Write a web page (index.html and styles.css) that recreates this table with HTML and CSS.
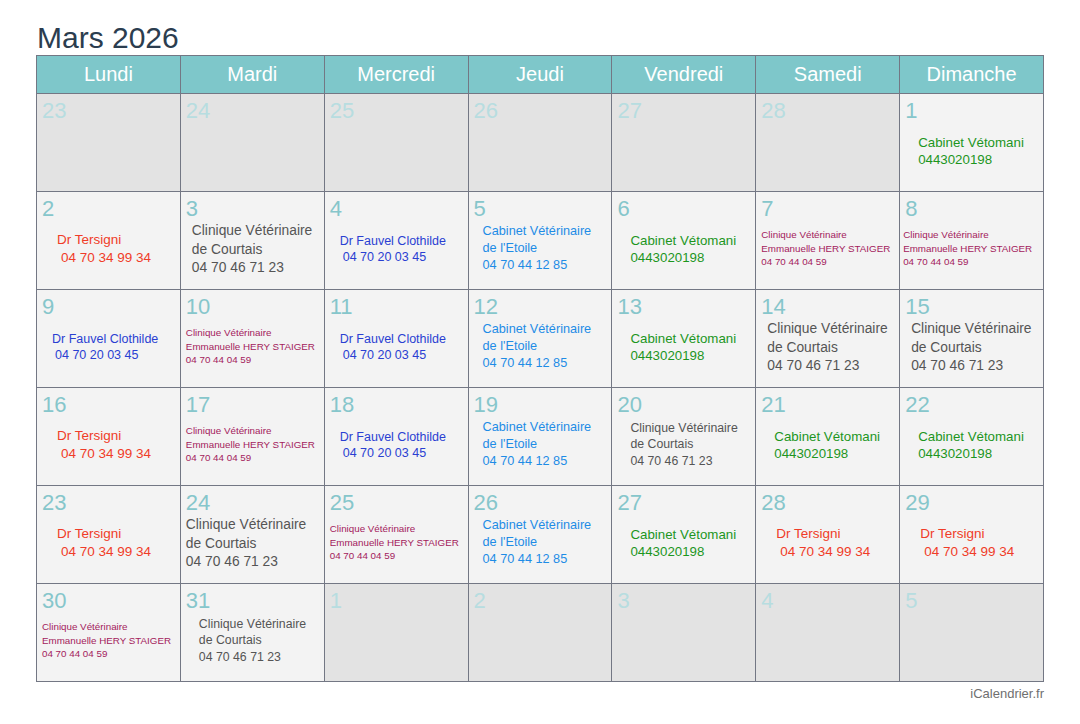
FILE: index.html
```html
<!DOCTYPE html>
<html lang="fr">
<head>
<meta charset="utf-8">
<title>Mars 2026</title>
<link rel="stylesheet" href="styles.css">
</head>
<body>
<div class="page">
  <h1 class="title">Mars 2026</h1>
  <div class="cal">
    <div class="hd">Lundi</div>
    <div class="hd">Mardi</div>
    <div class="hd">Mercredi</div>
    <div class="hd">Jeudi</div>
    <div class="hd">Vendredi</div>
    <div class="hd">Samedi</div>
    <div class="hd">Dimanche</div>

    <div class="cell off"><span class="num">23</span></div>
    <div class="cell off"><span class="num">24</span></div>
    <div class="cell off"><span class="num">25</span></div>
    <div class="cell off"><span class="num">26</span></div>
    <div class="cell off"><span class="num">27</span></div>
    <div class="cell off"><span class="num">28</span></div>
    <div class="cell"><span class="num">1</span>
      <div class="body"><div class="ev green"><div>Cabinet Vétomani</div><div>0443020198</div></div></div></div>

    <div class="cell"><span class="num">2</span>
      <div class="body"><div class="ev red"><div>Dr Tersigni</div><div class="ind">04 70 34 99 34</div></div></div></div>
    <div class="cell"><span class="num">3</span>
      <div class="body"><div class="ev gray"><div>Clinique Vétérinaire</div><div>de Courtais</div><div>04 70 46 71 23</div></div></div></div>
    <div class="cell"><span class="num">4</span>
      <div class="body"><div class="ev blue"><div>Dr Fauvel Clothilde</div><div class="ind">04 70 20 03 45</div></div></div></div>
    <div class="cell"><span class="num">5</span>
      <div class="body"><div class="ev lblue"><div>Cabinet Vétérinaire</div><div>de l'Etoile</div><div>04 70 44 12 85</div></div></div></div>
    <div class="cell"><span class="num">6</span>
      <div class="body"><div class="ev green"><div>Cabinet Vétomani</div><div>0443020198</div></div></div></div>
    <div class="cell"><span class="num">7</span>
      <div class="body"><div class="ev mag"><div>Clinique Vétérinaire</div><div>Emmanuelle HERY STAIGER</div><div>04 70 44 04 59</div></div></div></div>
    <div class="cell"><span class="num">8</span>
      <div class="body"><div class="ev mag edge"><div>Clinique Vétérinaire</div><div>Emmanuelle HERY STAIGER</div><div>04 70 44 04 59</div></div></div></div>

    <div class="cell"><span class="num">9</span>
      <div class="body"><div class="ev blue"><div>Dr Fauvel Clothilde</div><div class="ind">04 70 20 03 45</div></div></div></div>
    <div class="cell"><span class="num">10</span>
      <div class="body"><div class="ev mag"><div>Clinique Vétérinaire</div><div>Emmanuelle HERY STAIGER</div><div>04 70 44 04 59</div></div></div></div>
    <div class="cell"><span class="num">11</span>
      <div class="body"><div class="ev blue"><div>Dr Fauvel Clothilde</div><div class="ind">04 70 20 03 45</div></div></div></div>
    <div class="cell"><span class="num">12</span>
      <div class="body"><div class="ev lblue"><div>Cabinet Vétérinaire</div><div>de l'Etoile</div><div>04 70 44 12 85</div></div></div></div>
    <div class="cell"><span class="num">13</span>
      <div class="body"><div class="ev green"><div>Cabinet Vétomani</div><div>0443020198</div></div></div></div>
    <div class="cell"><span class="num">14</span>
      <div class="body"><div class="ev gray"><div>Clinique Vétérinaire</div><div>de Courtais</div><div>04 70 46 71 23</div></div></div></div>
    <div class="cell"><span class="num">15</span>
      <div class="body"><div class="ev gray"><div>Clinique Vétérinaire</div><div>de Courtais</div><div>04 70 46 71 23</div></div></div></div>

    <div class="cell"><span class="num">16</span>
      <div class="body"><div class="ev red"><div>Dr Tersigni</div><div class="ind">04 70 34 99 34</div></div></div></div>
    <div class="cell"><span class="num">17</span>
      <div class="body"><div class="ev mag"><div>Clinique Vétérinaire</div><div>Emmanuelle HERY STAIGER</div><div>04 70 44 04 59</div></div></div></div>
    <div class="cell"><span class="num">18</span>
      <div class="body"><div class="ev blue"><div>Dr Fauvel Clothilde</div><div class="ind">04 70 20 03 45</div></div></div></div>
    <div class="cell"><span class="num">19</span>
      <div class="body"><div class="ev lblue"><div>Cabinet Vétérinaire</div><div>de l'Etoile</div><div>04 70 44 12 85</div></div></div></div>
    <div class="cell"><span class="num">20</span>
      <div class="body"><div class="ev gray sm"><div>Clinique Vétérinaire</div><div>de Courtais</div><div>04 70 46 71 23</div></div></div></div>
    <div class="cell"><span class="num">21</span>
      <div class="body"><div class="ev green"><div>Cabinet Vétomani</div><div>0443020198</div></div></div></div>
    <div class="cell"><span class="num">22</span>
      <div class="body"><div class="ev green"><div>Cabinet Vétomani</div><div>0443020198</div></div></div></div>

    <div class="cell"><span class="num">23</span>
      <div class="body"><div class="ev red"><div>Dr Tersigni</div><div class="ind">04 70 34 99 34</div></div></div></div>
    <div class="cell"><span class="num">24</span>
      <div class="body"><div class="ev gray tight"><div>Clinique Vétérinaire</div><div>de Courtais</div><div>04 70 46 71 23</div></div></div></div>
    <div class="cell"><span class="num">25</span>
      <div class="body"><div class="ev mag"><div>Clinique Vétérinaire</div><div>Emmanuelle HERY STAIGER</div><div>04 70 44 04 59</div></div></div></div>
    <div class="cell"><span class="num">26</span>
      <div class="body"><div class="ev lblue"><div>Cabinet Vétérinaire</div><div>de l'Etoile</div><div>04 70 44 12 85</div></div></div></div>
    <div class="cell"><span class="num">27</span>
      <div class="body"><div class="ev green"><div>Cabinet Vétomani</div><div>0443020198</div></div></div></div>
    <div class="cell"><span class="num">28</span>
      <div class="body"><div class="ev red"><div>Dr Tersigni</div><div class="ind">04 70 34 99 34</div></div></div></div>
    <div class="cell"><span class="num">29</span>
      <div class="body"><div class="ev red"><div>Dr Tersigni</div><div class="ind">04 70 34 99 34</div></div></div></div>

    <div class="cell"><span class="num">30</span>
      <div class="body"><div class="ev mag"><div>Clinique Vétérinaire</div><div>Emmanuelle HERY STAIGER</div><div>04 70 44 04 59</div></div></div></div>
    <div class="cell"><span class="num">31</span>
      <div class="body"><div class="ev gray sm"><div>Clinique Vétérinaire</div><div>de Courtais</div><div>04 70 46 71 23</div></div></div></div>
    <div class="cell off"><span class="num">1</span></div>
    <div class="cell off"><span class="num">2</span></div>
    <div class="cell off"><span class="num">3</span></div>
    <div class="cell off"><span class="num">4</span></div>
    <div class="cell off"><span class="num">5</span></div>
  </div>
  <div class="footer">iCalendrier.fr</div>
</div>
</body>
</html>
```

FILE: styles.css
```css
html, body {
  margin: 0;
  padding: 0;
  background: #ffffff;
}

body {
  font-family: "Liberation Sans", Arial, Helvetica, sans-serif;
  color: #333;
}

.page {
  width: 1008px;
  margin-left: 36px;
  padding-top: 20px;
}

.title {
  margin: 0 0 0 1px;
  height: 35px;
  font-size: 30px;
  line-height: 36px;
  font-weight: normal;
  color: #2b3d4f;
}

.cal {
  display: grid;
  grid-template-columns: repeat(7, 1fr);
  grid-template-rows: 37px repeat(6, 97px);
  gap: 1px;
  padding: 1px;
  background: #737784;
}

.hd {
  background: #7ec7ca;
  color: #ffffff;
  font-size: 20px;
  display: flex;
  align-items: center;
  justify-content: center;
}

.cell {
  background: #f3f3f3;
  display: flex;
  flex-direction: column;
  min-width: 0;
}

.cell.off {
  background: #e3e3e3;
}

.num {
  display: block;
  height: 26px;
  padding: 4px 0 0 5px;
  font-size: 22px;
  line-height: 26px;
  color: #86c6cb;
}

.off .num {
  color: #b7dde0;
}

.body {
  flex: 1;
  display: flex;
  flex-direction: column;
  justify-content: center;
  padding-bottom: 14px;
}

.ev {
  white-space: nowrap;
}

.ev .ind {
  padding-left: 4px;
}

.red {
  color: #f03c28;
  font-size: 13.5px;
  line-height: 18px;
  padding-left: 20px;
}

.gray {
  color: #555555;
  font-size: 13.8px;
  line-height: 18.5px;
  padding-left: 11px;
}

.gray.sm {
  font-size: 12.3px;
  line-height: 16.5px;
  padding-left: 18px;
}

.gray.tight {
  padding-left: 5px;
}

.blue {
  color: #2a3fd2;
  font-size: 12.5px;
  line-height: 16px;
  padding-left: 15px;
}

.blue .ind {
  padding-left: 3px;
}

.lblue {
  color: #1e8ce6;
  font-size: 12.7px;
  line-height: 17px;
  padding-left: 14px;
}

.green {
  color: #1d961e;
  font-size: 13.3px;
  line-height: 17px;
  padding-left: 18px;
}

.mag {
  color: #a3215c;
  font-size: 9.8px;
  line-height: 13.5px;
  padding-left: 5px;
}

.mag.edge {
  padding-left: 3px;
}

.footer {
  text-align: right;
  font-size: 13px;
  line-height: 16px;
  color: #6f6f6f;
  padding-top: 4px;
}
```
